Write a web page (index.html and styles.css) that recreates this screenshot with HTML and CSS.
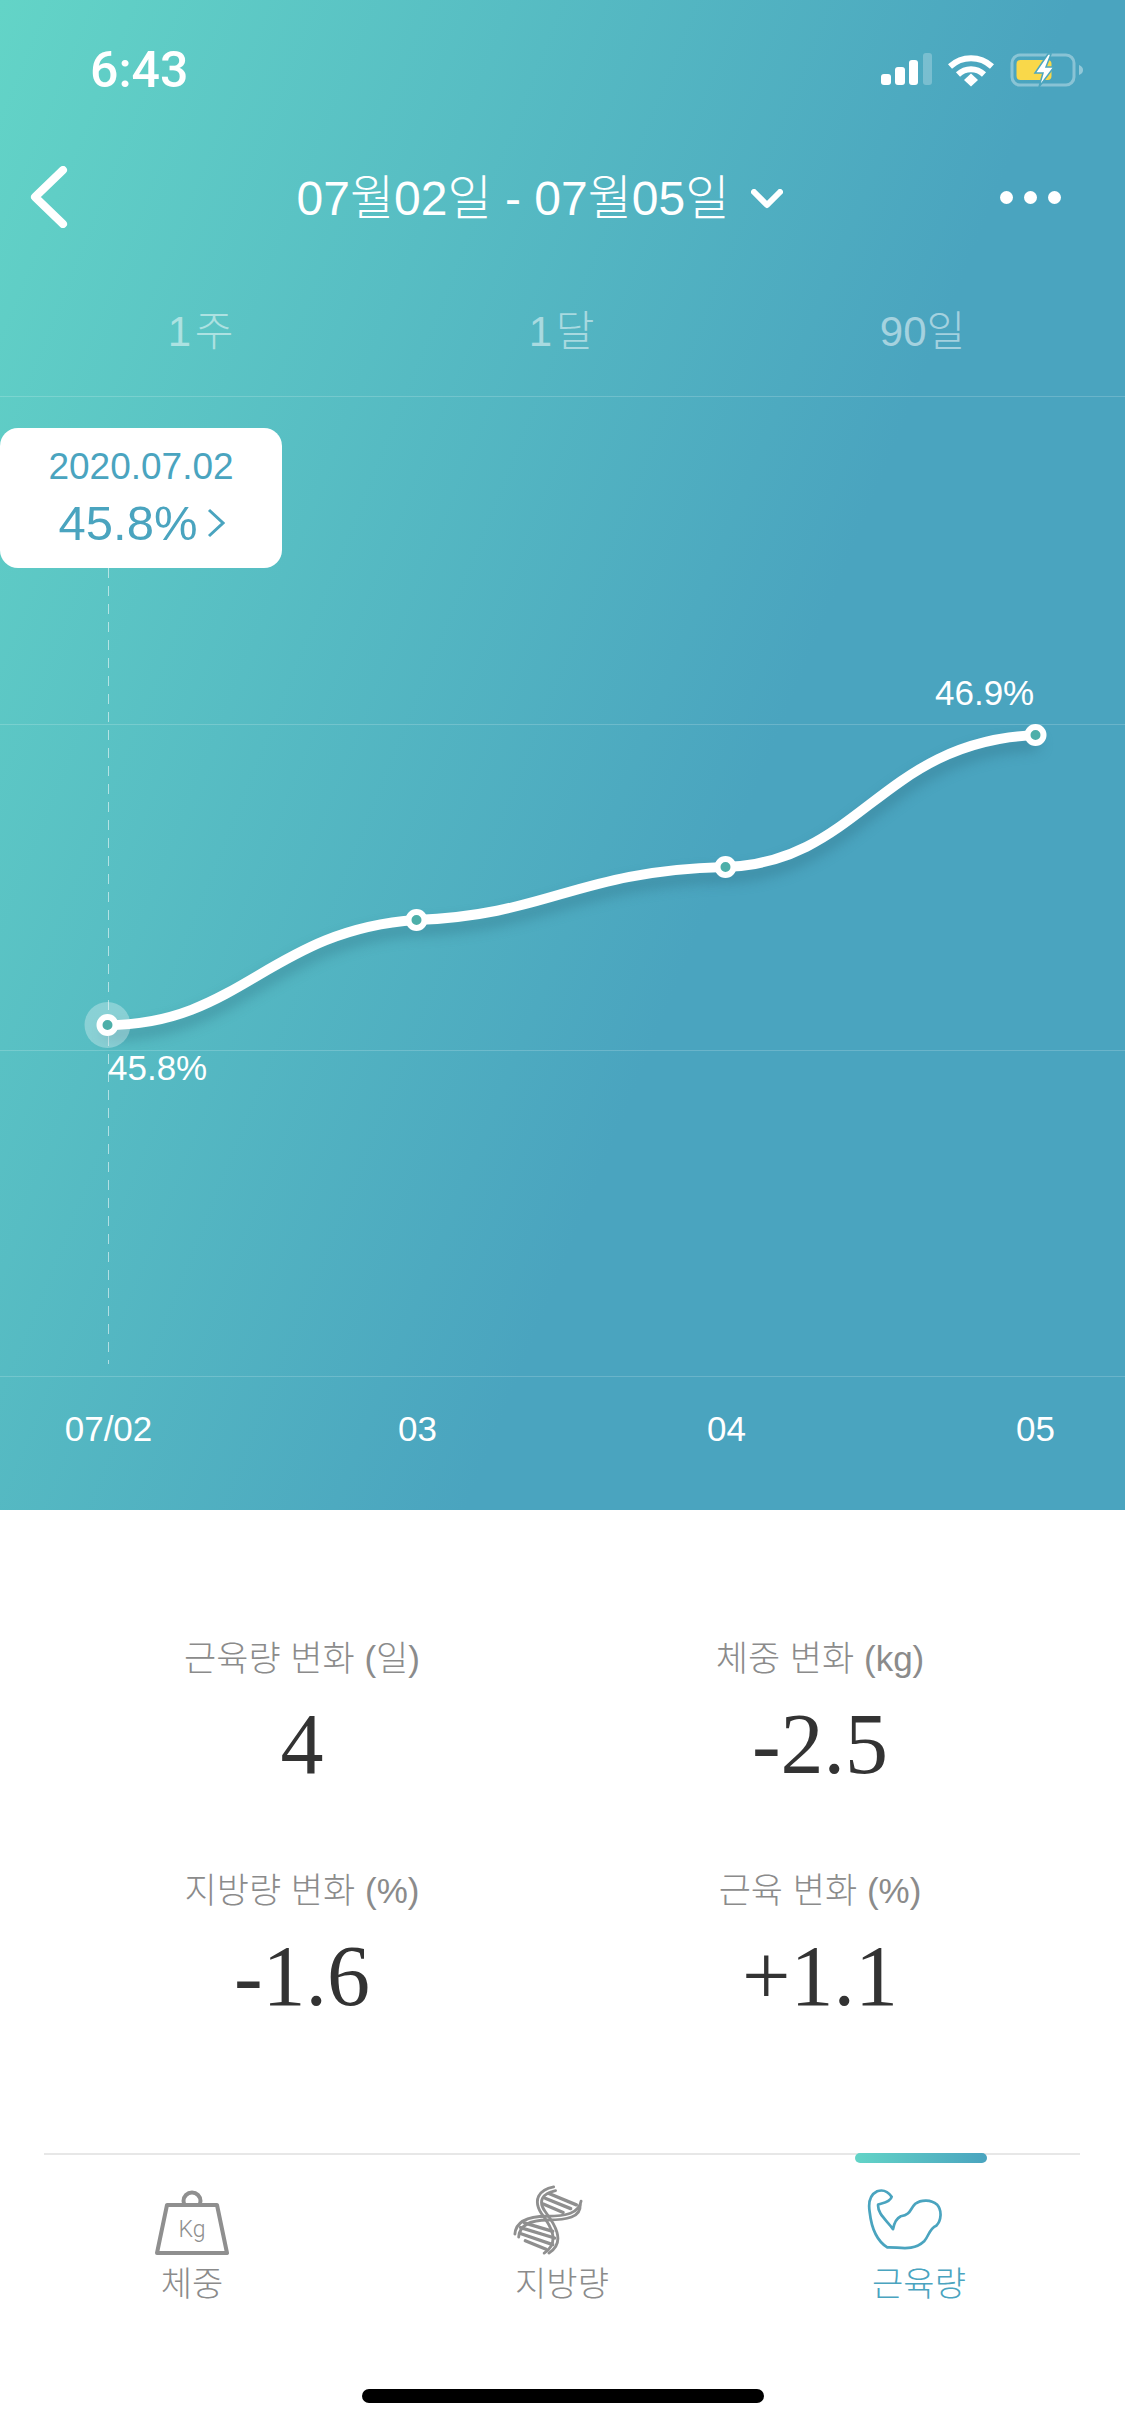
FILE: index.html
```html
<!DOCTYPE html>
<html lang="ko">
<head>
<meta charset="utf-8">
<title>근육량</title>
<link rel="stylesheet" href="styles.css">
</head>
<body>
<main class="screen">
  <section class="hero">
    <div class="status">
      <span class="time">6:43</span>
      <div class="status-icons">
        <svg class="ic-signal" viewBox="0 0 52 32"><rect x="0" y="21" width="10" height="11" rx="3" fill="#fff"/><rect x="14" y="14" width="10" height="18" rx="3" fill="#fff"/><rect x="28" y="7" width="9" height="25" rx="3" fill="#fff"/><rect x="42" y="0" width="9" height="32" rx="3" fill="#fff" opacity=".25"/></svg>
        <svg class="ic-wifi" viewBox="0 0 46 34"><path d="M2 13.500C14 2.500 32 2.500 44 13.500" fill="none" stroke="#fff" stroke-width="6"/><path d="M10 21.500C17.500 14.500 28.500 14.500 36 21.500" fill="none" stroke="#fff" stroke-width="6"/><path d="M16 27L23 20.500L30 27L23 33.500Z" fill="#fff"/></svg>
        <svg class="ic-battery" viewBox="0 0 74 34"><rect x="2" y="2" width="62" height="30" rx="8" fill="none" stroke="#fff" stroke-opacity=".35" stroke-width="3"/><path d="M69 12c3 1 4 3 4 5s-1 4-4 5z" fill="#fff" fill-opacity=".4"/><rect x="6.500" y="7" width="35" height="20" rx="4" fill="#f9d84a"/><path d="M38 1L25 20H33L29 34L44 14H36L41 1Z" fill="#fff" stroke="#4ca6be" stroke-width="1.500"/></svg>
      </div>
    </div>
    <header class="nav">
      <svg class="ic-back" viewBox="0 0 38 62"><path d="M33 4L5 31L33 58" fill="none" stroke="#fff" stroke-width="8" stroke-linecap="round" stroke-linejoin="round"/></svg>
      <div class="range">
        <span class="range-text">07월02일 - 07월05일</span>
        <svg class="ic-down" viewBox="0 0 32 20"><path d="M3 3L16 16L29 3" fill="none" stroke="#fff" stroke-width="6" stroke-linecap="round" stroke-linejoin="round"/></svg>
      </div>
      <div class="dots"><i></i><i></i><i></i></div>
    </header>
    <nav class="periods">
      <span>1 주</span>
      <span>1 달</span>
      <span>90일</span>
    </nav>
    <div class="chart">
      <svg class="plot" viewBox="0 396 1125 981">
        <g class="grid-lines">
          <line x1="0" y1="396.500" x2="1125" y2="396.500"/>
          <line x1="0" y1="724.500" x2="1125" y2="724.500"/>
          <line x1="0" y1="1050.500" x2="1125" y2="1050.500"/>
          <line x1="0" y1="1376.500" x2="1125" y2="1376.500"/>
        </g>
        <line class="cursor" x1="108.500" y1="568" x2="108.500" y2="1364"/>
        <path class="curve" d="M107 1025C240 1025 270 930 416 920C550 915 575 871 725 867C860 863 880 742 1035 735"/>
        <circle class="halo" cx="107.500" cy="1025" r="23"/>
        <g class="points">
          <circle cx="107.500" cy="1025" r="8"/>
          <circle cx="416.500" cy="920" r="8"/>
          <circle cx="725.500" cy="867" r="8"/>
          <circle cx="1035.500" cy="735" r="8"/>
        </g>
      </svg>
      <div class="tip">
        <div class="tip-date">2020.07.02</div>
        <div class="tip-value">45.8%<svg class="ic-tip" viewBox="0 0 18 30"><path d="M2 2L16 15L2 28" fill="none" stroke="#4aa4bf" stroke-width="3"/></svg></div>
      </div>
      <span class="pt-label pt-first">45.8%</span>
      <span class="pt-label pt-last">46.9%</span>
    </div>
    <div class="axis">
      <span>07/02</span>
      <span>03</span>
      <span>04</span>
      <span>05</span>
    </div>
  </section>
  <section class="stats">
    <div class="stat"><div class="stat-label">근육량 변화 (일)</div><div class="stat-value">4</div></div>
    <div class="stat"><div class="stat-label">체중 변화 (kg)</div><div class="stat-value">-2.5</div></div>
    <div class="stat"><div class="stat-label">지방량 변화 (%)</div><div class="stat-value">-1.6</div></div>
    <div class="stat"><div class="stat-label">근육 변화 (%)</div><div class="stat-value">+1.1</div></div>
  </section>
  <nav class="tabbar">
    <span class="tab-marker"></span>
    <div class="tab">
      <svg class="tab-icon ic-kg" viewBox="0 0 74 70"><circle cx="37" cy="16" r="8.500" fill="none" stroke="#8f8f8f" stroke-width="4"/><path d="M12 20H62L72 68H2Z" fill="#fff" stroke="#8f8f8f" stroke-width="4" stroke-linejoin="round"/><text x="37" y="52" text-anchor="middle" class="kg-text">Kg</text></svg>
      <span>체중</span>
    </div>
    <div class="tab tab-shift">
      <svg class="tab-icon ic-dna" viewBox="0 0 72 74"><g fill="none" stroke="#8f8f8f" stroke-linecap="round"><path stroke-width="3" d="M1 52C2 38 15 33 35 33C55 33 69 30 71 17"/><path stroke-width="3" d="M5 55C6 42 18 37 36 37C56 37 71 34 70 21"/><path stroke-width="3" d="M42 2C26 5 20 16 29 30C38 42 50 60 32 72"/><path stroke-width="3" d="M44 6C30 9 25 17 33 28C42 40 56 60 37 72"/><path stroke-width="3.500" d="M37 9L66 21M33 14L60 25M31 20L52 29M11 40L41 49M7 45L43 56M6 51L41 63M12 59L34 68"/></g></svg>
      <span>지방량</span>
    </div>
    <div class="tab tab-shift tab-active">
      <svg class="tab-icon ic-arm" viewBox="145 150 225 186"><path d="M222 270C205 245 175 225 178 197C190 193 215 190 218 174C208 160 192 152 175 158C155 168 148 190 153 220C158 265 175 305 205 324C240 322 280 338 315 305C328 290 330 268 350 260C365 245 368 215 352 197C335 182 305 182 288 195C272 210 275 228 245 232C232 238 225 255 222 270Z" fill="none" stroke="#4aa4bf" stroke-width="8" stroke-linejoin="round"/></svg>
      <span>근육량</span>
    </div>
  </nav>
  <div class="home-bar"><span></span></div>
</main>
</body>
</html>
```
FILE: styles.css
```css
* { box-sizing: border-box; }
html, body { margin: 0; padding: 0; background: #fff; }
body { font-family: "Liberation Sans", "Noto Sans CJK KR", sans-serif; }
.screen { width: 1125px; height: 2436px; display: flex; flex-direction: column; overflow: hidden; background: #fff; }

.hero { height: 1510px; display: flex; flex-direction: column; color: #fff; background: linear-gradient(112deg, #63d4c7 0%, #4aa4bf 62%, #4aa4bf 100%); }
.status { height: 100px; padding: 41px 41px 0 90px; display: flex; justify-content: space-between; align-items: flex-start; }
.time { font-family: Roboto, "Liberation Sans", sans-serif; font-weight: 500; font-size: 50px; line-height: 58px; }
.status-icons { display: flex; align-items: flex-start; padding-top: 12px; }
.ic-signal { width: 52px; height: 32px; margin-right: 15px; }
.ic-wifi { width: 46px; height: 34px; margin-right: 16px; }
.ic-battery { width: 74px; height: 34px; }

.nav { height: 68px; margin-top: 63px; padding: 0 64px 0 30px; display: flex; align-items: center; justify-content: space-between; }
.ic-back { width: 38px; height: 62px; }
.range { display: flex; align-items: center; gap: 22px; margin-left: 12px; margin-top: 3px; }
.range-text { font-size: 48px; line-height: 68px; font-weight: 300; }
.ic-down { width: 32px; height: 20px; }
.dots { display: flex; gap: 11px; }
.dots i { display: block; width: 13px; height: 13px; border-radius: 50%; background: #fff; }

.periods { height: 68px; margin-top: 67px; padding: 0 22px 0 20px; display: grid; grid-template-columns: repeat(3, 1fr); text-align: center; font-size: 42px; line-height: 68px; font-weight: 300; word-spacing: -8px; color: rgba(255, 255, 255, .5); }

.chart { position: relative; height: 981px; margin-top: 30px; }
.plot { display: block; width: 1125px; height: 981px; }
.grid-lines line { stroke: rgba(255, 255, 255, .18); stroke-width: 1; }
.cursor { stroke: rgba(255, 255, 255, .55); stroke-width: 1; stroke-dasharray: 10 8; }
.curve { fill: none; stroke: #fff; stroke-width: 10; stroke-linecap: round; filter: drop-shadow(0 9px 7px rgba(40, 100, 120, .45)); }
.halo { fill: rgba(255, 255, 255, .3); }
.points circle { fill: #4dafa9; stroke: #fff; stroke-width: 6; }

.tip { position: absolute; left: 0; top: 32px; width: 282px; height: 140px; padding-top: 17px; background: #fff; border-radius: 18px; color: #4aa4bf; text-align: center; }
.tip-date { font-size: 37px; line-height: 44px; }
.tip-value { margin-top: 4px; font-size: 49px; line-height: 60px; display: flex; align-items: center; justify-content: center; gap: 10px; padding-left: 2px; }
.ic-tip { width: 18px; height: 30px; }

.pt-label { position: absolute; font-size: 35px; line-height: 40px; }
.pt-first { left: 108px; top: 652px; }
.pt-last { left: 935px; top: 277px; }

.axis { display: grid; grid-template-columns: repeat(4, 309px); margin-left: -46px; margin-top: 32px; font-size: 35px; line-height: 40px; text-align: center; }

.stats { height: 643px; padding-top: 127px; display: grid; grid-template-columns: 604px 432px; grid-auto-rows: 161px; row-gap: 71px; align-content: start; text-align: center; }
.stat-label { font-size: 35px; line-height: 44px; font-weight: 300; color: #8b8b8b; }
.stat-value { margin-top: 13px; font-family: "Liberation Serif", serif; font-size: 86px; line-height: 100px; color: #333; }

.tabbar { position: relative; height: 226px; margin: 0 45px 0 44px; border-top: 2px solid #e7e7e7; display: grid; grid-template-columns: 296px 444px 270px; }
.tab-marker { position: absolute; left: 811px; top: -2px; width: 132px; height: 10px; border-radius: 5px; background: linear-gradient(90deg, #63d4c7, #4aa4bf); }
.tab { display: flex; flex-direction: column; align-items: center; padding-top: 30px; font-size: 34px; line-height: 44px; font-weight: 300; color: #8b8b8b; }
.tab-icon { display: block; height: 70px; margin-bottom: 7px; }
.tab-shift .tab-icon { margin-right: 28px; }
.ic-kg { width: 74px; }
.ic-dna { width: 72px; }
.ic-arm { width: 76px; }
.tab-active { color: #4aa4bf; }
.kg-text { font-family: Roboto, "Liberation Sans", sans-serif; font-size: 23px; fill: #8f8f8f; }

.home-bar { flex: 1; display: flex; justify-content: center; padding-top: 10px; }
.home-bar span { width: 402px; height: 14px; border-radius: 7px; background: #000; }
```
